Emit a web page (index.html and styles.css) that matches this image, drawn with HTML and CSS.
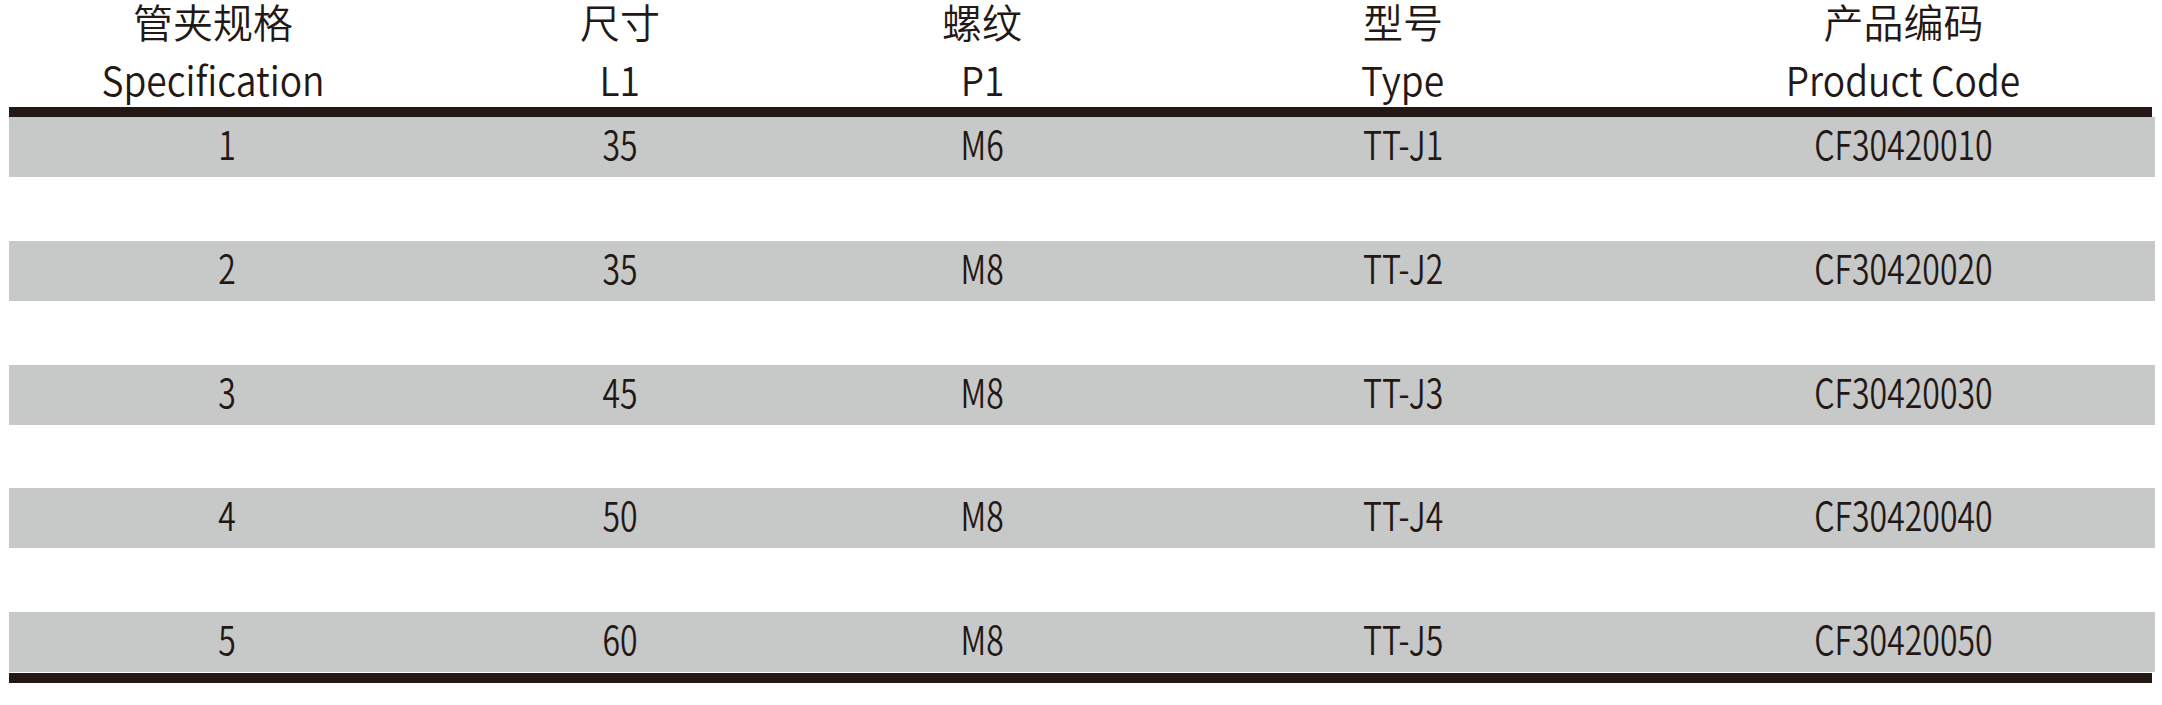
FILE: index.html
```html
<!DOCTYPE html>
<html lang="zh-CN">
<head>
<meta charset="utf-8">
<title>管夹规格</title>
<link rel="stylesheet" href="styles.css">
</head>
<body>
<div class="table">
  <div class="head">
    <div class="hcell c1"><span class="zh">管夹规格</span><span class="en">Specification</span></div>
    <div class="hcell c2"><span class="zh">尺寸</span><span class="en">L1</span></div>
    <div class="hcell c3"><span class="zh">螺纹</span><span class="en">P1</span></div>
    <div class="hcell c4"><span class="zh">型号</span><span class="en">Type</span></div>
    <div class="hcell c5"><span class="zh">产品编码</span><span class="en">Product Code</span></div>
  </div>
  <div class="rule"></div>
  <div class="body">
    <div class="row">
      <div class="cell c1"><span>1</span></div><div class="cell c2"><span>35</span></div><div class="cell c3"><span>M6</span></div><div class="cell c4"><span>TT-J1</span></div><div class="cell c5"><span>CF30420010</span></div>
    </div>
    <div class="row">
      <div class="cell c1"><span>2</span></div><div class="cell c2"><span>35</span></div><div class="cell c3"><span>M8</span></div><div class="cell c4"><span>TT-J2</span></div><div class="cell c5"><span>CF30420020</span></div>
    </div>
    <div class="row">
      <div class="cell c1"><span>3</span></div><div class="cell c2"><span>45</span></div><div class="cell c3"><span>M8</span></div><div class="cell c4"><span>TT-J3</span></div><div class="cell c5"><span>CF30420030</span></div>
    </div>
    <div class="row">
      <div class="cell c1"><span>4</span></div><div class="cell c2"><span>50</span></div><div class="cell c3"><span>M8</span></div><div class="cell c4"><span>TT-J4</span></div><div class="cell c5"><span>CF30420040</span></div>
    </div>
    <div class="row">
      <div class="cell c1"><span>5</span></div><div class="cell c2"><span>60</span></div><div class="cell c3"><span>M8</span></div><div class="cell c4"><span>TT-J5</span></div><div class="cell c5"><span>CF30420050</span></div>
    </div>
  </div>
  <div class="rule bottom"></div>
</div>
</body>
</html>
```

FILE: styles.css
```css
html, body {
  margin: 0;
  padding: 0;
  background: #ffffff;
}

body {
  font-family: "Noto Sans CJK SC", "Noto Sans", sans-serif;
  font-weight: 350;
  color: #231815;
}

.table {
  margin-left: 9px;
  width: 2146px;
}

.head,
.row {
  display: grid;
  grid-template-columns: 408px 406px 318px 524px 490px;
}

.hcell {
  display: flex;
  flex-direction: column;
  align-items: center;
  font-size: 40px;
}

.hcell .zh {
  line-height: 43px;
}

.hcell .en {
  display: inline-block;
  padding-top: 8px;
  line-height: 56px;
  transform: scaleX(0.93);
}

.hcell.c5,
.cell.c5 {
  padding-right: 13px;
}

.rule {
  width: 2143px;
  height: 10px;
  background: #231815;
}

.rule.bottom {
  margin-top: 1px;
}

.body {
  display: flex;
  flex-direction: column;
  gap: 63.75px;
}

.row {
  height: 60px;
  background: #c7c9c8;
}

.cell {
  display: flex;
  justify-content: center;
  font-size: 40px;
  line-height: 53px;
}

.cell.c1 {
  padding-left: 28px;
}

.cell span {
  display: inline-block;
  transform: scaleX(0.8);
}
```
